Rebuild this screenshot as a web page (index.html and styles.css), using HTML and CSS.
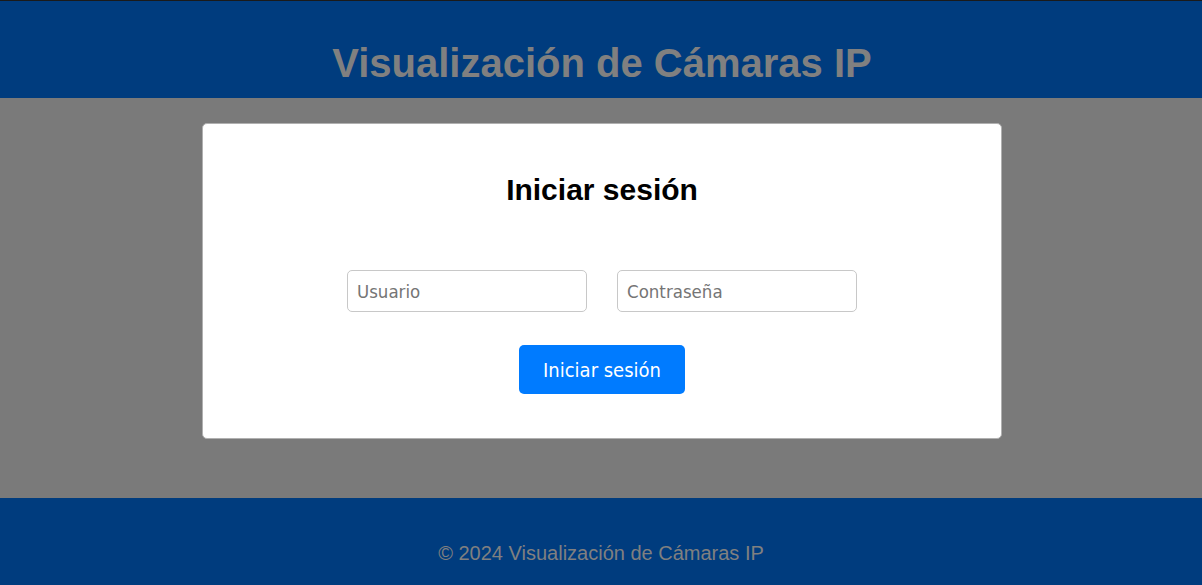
FILE: index.html
```html
<!DOCTYPE html>
<html lang="es">
<head>
<meta charset="utf-8">
<title>Visualización de Cámaras IP</title>
<link rel="stylesheet" href="styles.css">
</head>
<body>
<header class="site-header">
  <h1 class="site-title">Visualización de Cámaras IP</h1>
</header>
<main class="site-main">
  <section class="login-card">
    <h2 class="login-title">Iniciar sesión</h2>
    <form class="login-form">
      <div class="login-fields">
        <input class="field" type="text" placeholder="Usuario">
        <input class="field" type="password" placeholder="Contraseña">
      </div>
      <button class="login-btn" type="button">Iniciar sesión</button>
    </form>
  </section>
</main>
<footer class="site-footer">
  <p class="footer-text">© 2024 Visualización de Cámaras IP</p>
</footer>
</body>
</html>
```
FILE: styles.css
```css
html, body {
  margin: 0;
  padding: 0;
}
body {
  font-family: "Liberation Sans", Arial, sans-serif;
  background: #7a7a7a;
  border-top: 1px solid #1a1a1a;
}
.site-header {
  background: #003c7e;
  height: 97px;
  box-sizing: border-box;
  padding: 39px 0 0 2px;
  text-align: center;
}
.site-title {
  margin: 0;
  font-size: 40px;
  line-height: 46px;
  font-weight: bold;
  color: #808080;
}
.site-main {
  background: #7a7a7a;
  height: 400px;
  padding: 25px 0 0 2px;
  box-sizing: border-box;
}
.login-card {
  width: 800px;
  height: 316px;
  box-sizing: border-box;
  margin: 0 auto;
  background: #fff;
  border: 1px solid #b0b0b0;
  border-radius: 5px;
  padding-top: 48px;
}
.login-title {
  margin: 0;
  text-align: center;
  font-size: 30px;
  font-weight: bold;
  color: #000;
  line-height: 36px;
}
.login-form {
  display: flex;
  flex-direction: column;
  align-items: center;
  margin-top: 62px;
}
.login-fields {
  display: flex;
  gap: 30px;
}
.field {
  width: 240px;
  height: 42px;
  box-sizing: border-box;
  border: 1px solid #c8c8c8;
  border-radius: 5px;
  padding: 0 9px;
  font-family: "DejaVu Sans Condensed", "DejaVu Sans", sans-serif;
  font-size: 18.5px;
  color: #333;
  background: #fff;
}
.field::placeholder {
  color: #757575;
}
.login-btn {
  margin-top: 33px;
  width: 166px;
  height: 49px;
  border: none;
  border-radius: 5px;
  background: #007bff;
  color: #fff;
  font-family: "DejaVu Sans Condensed", "DejaVu Sans", sans-serif;
  font-size: 20px;
  cursor: pointer;
}
.site-footer {
  background: #003c7e;
  height: 87px;
  display: flex;
  justify-content: center;
}
.footer-text {
  margin: 0;
  padding-top: 43px;
  font-size: 20px;
  color: #808080;
  line-height: 24px;
}
```
